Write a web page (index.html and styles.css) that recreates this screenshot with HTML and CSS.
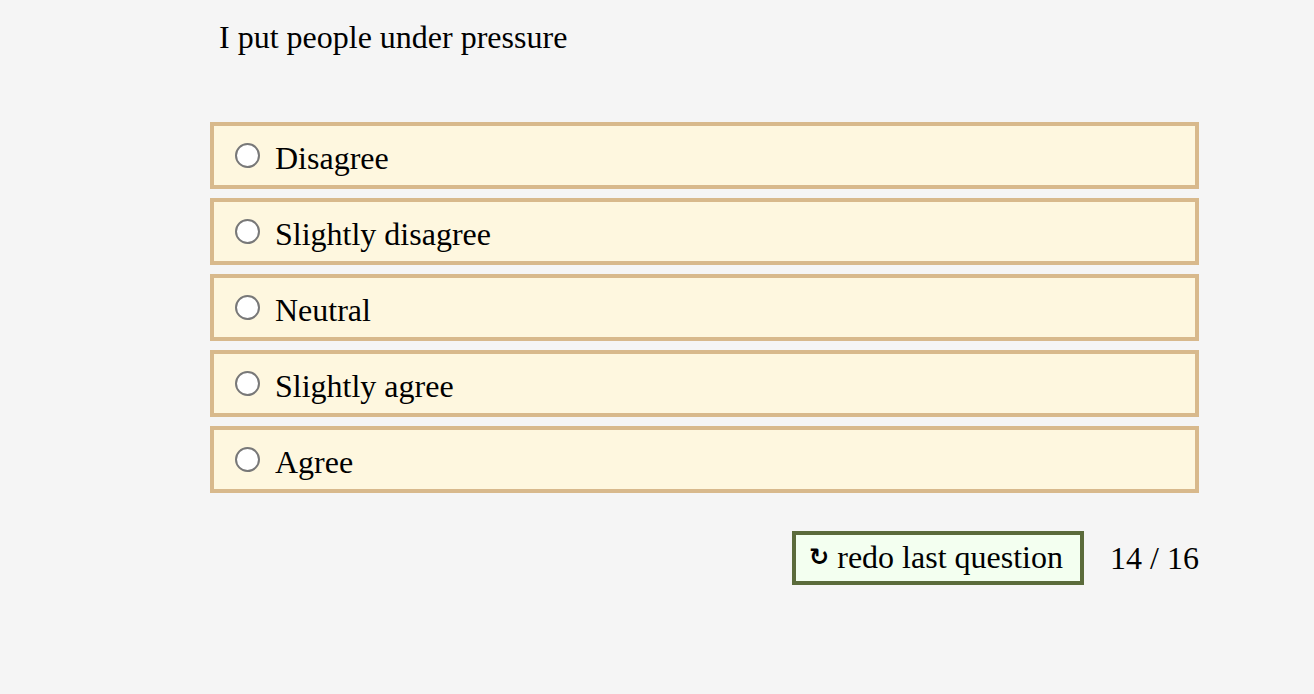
FILE: index.html
```html
<!DOCTYPE html>
<html lang="en">
<head>
<meta charset="utf-8">
<title>Question</title>
<link rel="stylesheet" href="styles.css">
</head>
<body>
<main class="quiz">
  <h1 class="question">I put people under pressure</h1>
  <div class="options">
    <label class="option"><span class="radio"></span><span class="label">Disagree</span></label>
    <label class="option"><span class="radio"></span><span class="label">Slightly disagree</span></label>
    <label class="option"><span class="radio"></span><span class="label">Neutral</span></label>
    <label class="option"><span class="radio"></span><span class="label">Slightly agree</span></label>
    <label class="option"><span class="radio"></span><span class="label">Agree</span></label>
  </div>
  <div class="footer">
    <button class="redo" type="button"><span class="redo-icon">↻</span>&nbsp;redo last question</button>
    <span class="count">14 / 16</span>
  </div>
</main>
</body>
</html>
```

FILE: styles.css
```css
html, body {
  margin: 0;
  padding: 0;
  background: #f5f5f5;
}
body {
  font-family: "Liberation Serif", "Times New Roman", serif;
  font-size: 32px;
  color: #000;
}
.quiz {
  width: 989px;
  margin-left: 210px;
  padding-top: 19px;
}
.question {
  margin: 0 0 66px 9px;
  font-size: 32px;
  font-weight: normal;
  line-height: 37px;
}
.options {
  display: flex;
  flex-direction: column;
  gap: 9px;
}
.option {
  box-sizing: border-box;
  height: 67px;
  border: 4px solid #d8b98c;
  background: #fef7df;
  display: flex;
  align-items: flex-start;
  padding: 14px 0 0 21px;
  line-height: 37px;
}
.radio {
  box-sizing: border-box;
  width: 25px;
  height: 25px;
  border-radius: 50%;
  border: 2px solid #787878;
  background: #fff;
  margin-top: 3px;
  flex: none;
}
.label {
  margin-left: 15px;
}
.footer {
  display: flex;
  justify-content: flex-end;
  align-items: center;
  gap: 26px;
  margin-top: 38px;
}
.redo {
  box-sizing: border-box;
  height: 54px;
  width: 292px;
  border: 4px solid #5b6b3b;
  background: #f3fff0;
  font-family: "Liberation Serif", "Times New Roman", serif;
  font-size: 32px;
  line-height: 37px;
  color: #000;
  padding: 4px 0 0 13px;
  margin: 0;
  display: flex;
  align-items: flex-start;
  white-space: nowrap;
}
.redo-icon {
  font-family: "DejaVu Sans", sans-serif;
  font-size: 24px;
  font-weight: bold;
}
.count {
  line-height: 37px;
}
```
